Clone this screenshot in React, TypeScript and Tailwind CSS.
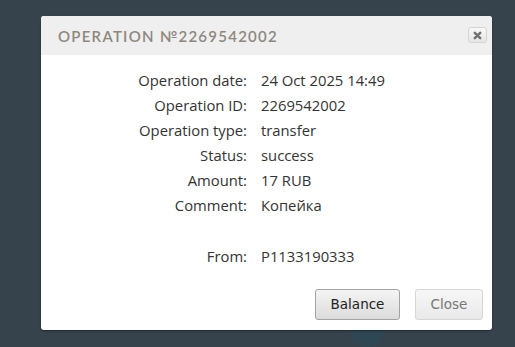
import React from 'react'

const rows: {label: string; value: string}[] = [
  {label: "Operation date:", value: "24 Oct 2025 14:49"},
  {label: "Operation ID:", value: "2269542002"},
  {label: "Operation type:", value: "transfer"},
  {label: "Status:", value: "success"},
  {label: "Amount:", value: "17 RUB"},
  {label: "Comment:", value: "Копейка"},
  {label: "", value: ""},
  {label: "From:", value: "P1133190333"},
]

const CloseIcon = () => (
  <svg width="9" height="9" viewBox="0 0 10 10">
    <path d="M2 2 L8 8 M8 2 L2 8" stroke="#707070" strokeWidth="2.8" strokeLinecap="round" />
  </svg>
)

export default function App() {
  return (
    <div className="relative w-[515px] h-[347px] bg-[#37434c] overflow-hidden">
      {/* faint page content behind the overlay */}
      <div className="absolute left-[350px] top-[313px] w-[34px] h-[34px] rounded-full bg-[#2f4653]" />

      <div className="absolute left-[41px] top-[16px] w-[451px] h-[314px] bg-white rounded-[3px] flex flex-col shadow-[0_1px_2px_rgba(0,0,0,0.4)]">
        <div className="h-[39px] bg-[#efefef] rounded-t-[3px] flex items-center pl-[17px] pr-[5px]">
          <div className="flex-grow text-[15px] tracking-[1.25px] text-[#8d877e] font-['Lato',sans-serif] font-semibold pt-[1px]">
            OPERATION №2269542002
          </div>
          <button className="w-[19px] h-[16px] mb-[1px] rounded-[3px] border border-[#d4d4d4] bg-gradient-to-b from-[#f8f8f8] to-[#e6e6e6] flex items-center justify-center">
            <CloseIcon />
          </button>
        </div>

        <div className="flex-grow pt-[12px] font-['Open_Sans',sans-serif] text-[14.8px] text-[#333]">
          {rows.map((r, i) => (
            <div key={i} className="flex h-[25.2px] items-center">
              <div className="w-[206px] text-right text-[#333]">{r.label}</div>
              <div className="ml-[14px] text-[#333]">{r.value}</div>
            </div>
          ))}
        </div>

        <div className="flex justify-end gap-[15px] pr-[9px] pb-[10px] font-['DejaVu_Sans',sans-serif] text-[13.5px]">
          <button className="w-[85px] h-[31px] rounded-[3px] border border-[#a3a3a3] bg-gradient-to-b from-[#f4f4f4] to-[#dcdcdc] text-[#222]">
            Balance
          </button>
          <button className="w-[68px] h-[31px] rounded-[3px] border border-[#d6d6d6] bg-gradient-to-b from-[#f7f7f7] to-[#e9e9e9] text-[#777]">
            Close
          </button>
        </div>
      </div>
    </div>
  )
}
